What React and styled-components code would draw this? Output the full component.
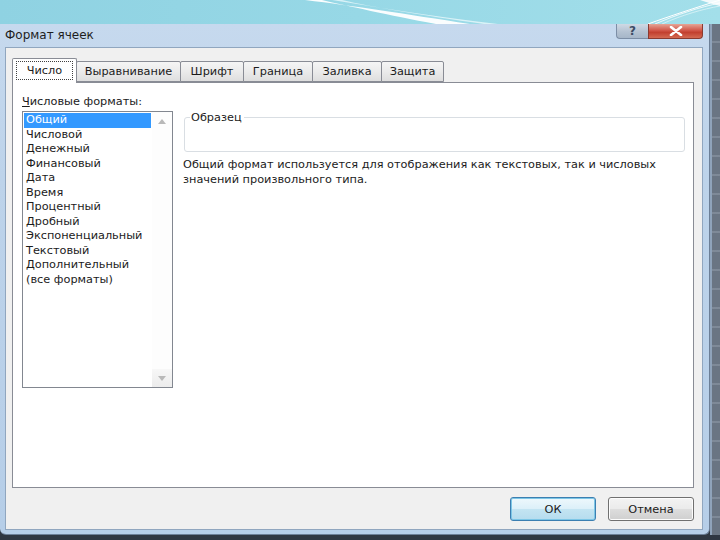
import React from "react";
import styled, { createGlobalStyle } from "styled-components";

const GlobalStyle = createGlobalStyle`
  html, body {
    margin: 0;
    padding: 0;
    background: #2f3742;
  }
  body {
    font-family: "DejaVu Sans", "Liberation Sans", sans-serif;
    font-size: 11.3px;
    color: #1b1b1b;
  }
`;

const formats = [
  "Общий",
  "Числовой",
  "Денежный",
  "Финансовый",
  "Дата",
  "Время",
  "Процентный",
  "Дробный",
  "Экспоненциальный",
  "Текстовый",
  "Дополнительный",
  "(все форматы)",
];

const tabs = [
  { label: "Число", width: 65 },
  { label: "Выравнивание", width: 105 },
  { label: "Шрифт", width: 64 },
  { label: "Граница", width: 70 },
  { label: "Заливка", width: 70 },
  { label: "Защита", width: 63 },
];

export default function App() {
  return (
    <Stage>
      <GlobalStyle />
      <TopBand>
        <svg width="720" height="24" viewBox="0 0 720 24">
          <path d="M305 0 C 355 6, 405 14, 470 24 L 436 24 C 388 15, 348 6, 322 0 Z" fill="#ffffff" opacity="0.95" />
          <path d="M332 0 C 382 8, 430 16, 498 24 L 484 24 C 420 15, 372 7, 342 0 Z" fill="#eefafc" opacity="0.75" />
          <path d="M648 24 C 670 16, 695 8, 720 0" stroke="#ffffff" strokeWidth="1" fill="none" />
          <path d="M655 24 C 676 15, 700 7, 720 3" stroke="#ffffff" strokeWidth="1" fill="none" opacity="0.8" />
          <path d="M662 24 C 682 15, 703 9, 720 6" stroke="#e6f7fa" strokeWidth="1" fill="none" opacity="0.7" />
          <path d="M700 0 L720 0 L720 6 C 712 4, 706 2, 700 0 Z" fill="#ffffff" opacity="0.85" />
        </svg>
      </TopBand>
      <Middle>
        <Window>
          <TitleBar>
            <Title>Формат ячеек</Title>
            <CaptionButtons>
              <HelpButton>?</HelpButton>
              <CloseButton>
                <svg width="14" height="10" viewBox="0 0 14 10">
                  <path d="M2 1 L12 9 M12 1 L2 9" stroke="#ffffff" strokeWidth="2.6" strokeLinecap="round" />
                </svg>
              </CloseButton>
            </CaptionButtons>
          </TitleBar>
          <Client>
            <TabRow>
              {tabs.map((t, i) => (
                <Tab key={t.label} $active={i === 0} $width={t.width}>
                  {i === 0 ? <Focus>{t.label}</Focus> : t.label}
                </Tab>
              ))}
            </TabRow>
            <Panel>
              <LeftColumn>
                <FieldLabel>
                  <u>Ч</u>исловые форматы:
                </FieldLabel>
                <ListBox>
                  <Items>
                    {formats.map((f, i) => (
                      <Item key={f} $selected={i === 0}>
                        {f}
                      </Item>
                    ))}
                  </Items>
                  <ScrollColumn>
                    <ArrowBox>
                      <svg width="8" height="5" viewBox="0 0 8 5">
                        <path d="M0 5 L4 0 L8 5 Z" fill="#b9b9b9" />
                      </svg>
                    </ArrowBox>
                    <ArrowBox $bottom>
                      <svg width="8" height="5" viewBox="0 0 8 5">
                        <path d="M0 0 L4 5 L8 0 Z" fill="#b9b9b9" />
                      </svg>
                    </ArrowBox>
                  </ScrollColumn>
                </ListBox>
              </LeftColumn>
              <RightColumn>
                <GroupBox>
                  <Legend>Образец</Legend>
                </GroupBox>
                <Description>
                  Общий формат используется для отображения как текстовых, так и числовых
                  <br />
                  значений произвольного типа.
                </Description>
              </RightColumn>
            </Panel>
            <Footer>
              <DialogButton $default>ОК</DialogButton>
              <DialogButton>Отмена</DialogButton>
            </Footer>
          </Client>
        </Window>
        <SheetEdge />
      </Middle>
    </Stage>
  );
}

const Stage = styled.div`
  width: 720px;
  height: 540px;
  display: flex;
  flex-direction: column;
  overflow: hidden;
  background: #2f3742;
`;

const TopBand = styled.div`
  height: 24px;
  flex: none;
  background: linear-gradient(90deg, #8fd2e2 0%, #97d8e6 50%, #a3dfea 100%);
  line-height: 0;
`;

const Middle = styled.div`
  display: flex;
  height: 511px;
`;

const Window = styled.div`
  width: 710px;
  flex: none;
  display: flex;
  flex-direction: column;
  box-sizing: border-box;
  padding: 0 6px 4px 5px;
  background: linear-gradient(180deg, #c6d9ee 0%, #bdd3ea 30%, #b6cee8 100%);
  border-right: 1px solid #6c7f97;
  border-bottom: 1px solid #6c7f97;
  border-radius: 0 0 6px 6px;
`;

const TitleBar = styled.div`
  height: 23px;
  flex: none;
  display: flex;
  justify-content: space-between;
  align-items: flex-start;
`;

const Title = styled.div`
  font-size: 12px;
  line-height: 23px;
  color: #1e1e1e;
`;

const CaptionButtons = styled.div`
  display: flex;
  height: 15px;
`;

const HelpButton = styled.div`
  width: 32px;
  height: 15px;
  box-sizing: border-box;
  border: 1px solid #7c8ea6;
  border-top: none;
  border-right: none;
  border-radius: 0 0 0 4px;
  background: linear-gradient(180deg, #cfd9e4 0%, #b4c2d2 55%, #a6b6c8 100%);
  color: #3c4c64;
  font-weight: bold;
  font-size: 12px;
  line-height: 14px;
  text-align: center;
`;

const CloseButton = styled.div`
  width: 55px;
  height: 15px;
  box-sizing: border-box;
  border: 1px solid #8a3a30;
  border-top: none;
  border-radius: 0 0 4px 0;
  background: linear-gradient(180deg, #e5a597 0%, #d2584a 45%, #c2402f 60%, #d46a52 100%);
  display: flex;
  align-items: center;
  justify-content: center;
`;

const Client = styled.div`
  flex: 1;
  display: flex;
  flex-direction: column;
  box-sizing: border-box;
  background: #f0f0f0;
  border: 1px solid #90a6bf;
  padding: 10px 8px 0 6px;
`;

const TabRow = styled.div`
  height: 24px;
  flex: none;
  display: flex;
  align-items: flex-end;
`;

const Tab = styled.div`
  position: relative;
  z-index: ${(p) => (p.$active ? 1 : 0)};
  width: ${(p) => p.$width}px;
  height: ${(p) => (p.$active ? 25 : 21)}px;
  margin-bottom: ${(p) => (p.$active ? -1 : 0)}px;
  margin-left: -1px;
  box-sizing: border-box;
  border: 1px solid #898c95;
  border-bottom: ${(p) => (p.$active ? "none" : "1px solid #898c95")};
  border-radius: 2px 2px 0 0;
  background: ${(p) =>
    p.$active ? "#ffffff" : "linear-gradient(180deg, #f5f5f5 0%, #ebebeb 50%, #dedede 100%)"};
  display: flex;
  align-items: center;
  justify-content: center;
  padding-bottom: ${(p) => (p.$active ? 1 : 0)}px;
  white-space: nowrap;

  &:first-child {
    margin-left: 0;
  }
`;

const Focus = styled.span`
  border: 1px dotted #404040;
  padding: 2px 10px;
`;

const Panel = styled.div`
  height: 406px;
  flex: none;
  box-sizing: border-box;
  background: #ffffff;
  border: 1px solid #898c95;
  display: grid;
  grid-template-columns: 151px 1fr;
  column-gap: 11px;
  padding: 11px 8px 0 9px;
  align-items: start;
`;

const LeftColumn = styled.div`
  display: flex;
  flex-direction: column;
  gap: 2px;
`;

const FieldLabel = styled.div`
  line-height: 15px;
`;

const ListBox = styled.div`
  height: 277px;
  box-sizing: border-box;
  border: 1px solid #828790;
  display: flex;
`;

const Items = styled.div`
  flex: 1;
  padding: 1px 1px 0 1px;
  display: flex;
  flex-direction: column;
`;

const Item = styled.div`
  height: 14.5px;
  line-height: 14.5px;
  padding-left: 2px;
  white-space: nowrap;
  background: ${(p) => (p.$selected ? "#3399ff" : "transparent")};
  color: ${(p) => (p.$selected ? "#ffffff" : "#1b1b1b")};
`;

const ScrollColumn = styled.div`
  width: 20px;
  flex: none;
  display: flex;
  flex-direction: column;
  justify-content: space-between;
  background: #fdfdfd;
`;

const ArrowBox = styled.div`
  height: 18px;
  display: flex;
  align-items: center;
  justify-content: center;
  background: ${(p) => (p.$bottom ? "linear-gradient(180deg, #f7f7f7, #ececec)" : "transparent")};
`;

const RightColumn = styled.div`
  padding-top: 23px;
  display: flex;
  flex-direction: column;
`;

const GroupBox = styled.div`
  position: relative;
  height: 35px;
  box-sizing: border-box;
  border: 1px solid #d9dee3;
  border-radius: 3px;
`;

const Legend = styled.span`
  position: absolute;
  top: -8px;
  left: 5px;
  padding: 0 2px 0 1px;
  background: #ffffff;
  line-height: 15px;
`;

const Description = styled.div`
  margin-top: 5px;
  margin-left: -1px;
  line-height: 15px;
  white-space: nowrap;
`;

const Footer = styled.div`
  flex: 1;
  display: flex;
  justify-content: flex-end;
  align-items: center;
  gap: 12px;
  padding-top: 1px;
`;

const DialogButton = styled.div`
  width: 86px;
  height: 24px;
  box-sizing: border-box;
  border: 1px solid ${(p) => (p.$default ? "#3c7fb1" : "#707070")};
  border-radius: 3px;
  background: ${(p) =>
    p.$default
      ? "linear-gradient(180deg, #eef8fc 0%, #dcf0f9 48%, #c3e4f2 52%, #b5dcee 100%)"
      : "linear-gradient(180deg, #f3f3f3 0%, #ebebeb 48%, #dddddd 52%, #cfcfcf 100%)"};
  box-shadow: ${(p) => (p.$default ? "inset 0 0 0 1px #7cc6e6" : "inset 0 0 0 1px #fcfcfc")};
  display: flex;
  align-items: center;
  justify-content: center;
  color: #1b1b1b;
`;

const SheetEdge = styled.div`
  flex: 1;
  background: repeating-linear-gradient(180deg, #6a7583 0px, #6a7583 17px, #939eac 18px, #6a7583 19px);
  border-left: 2px solid #8fa3ba;
`;
